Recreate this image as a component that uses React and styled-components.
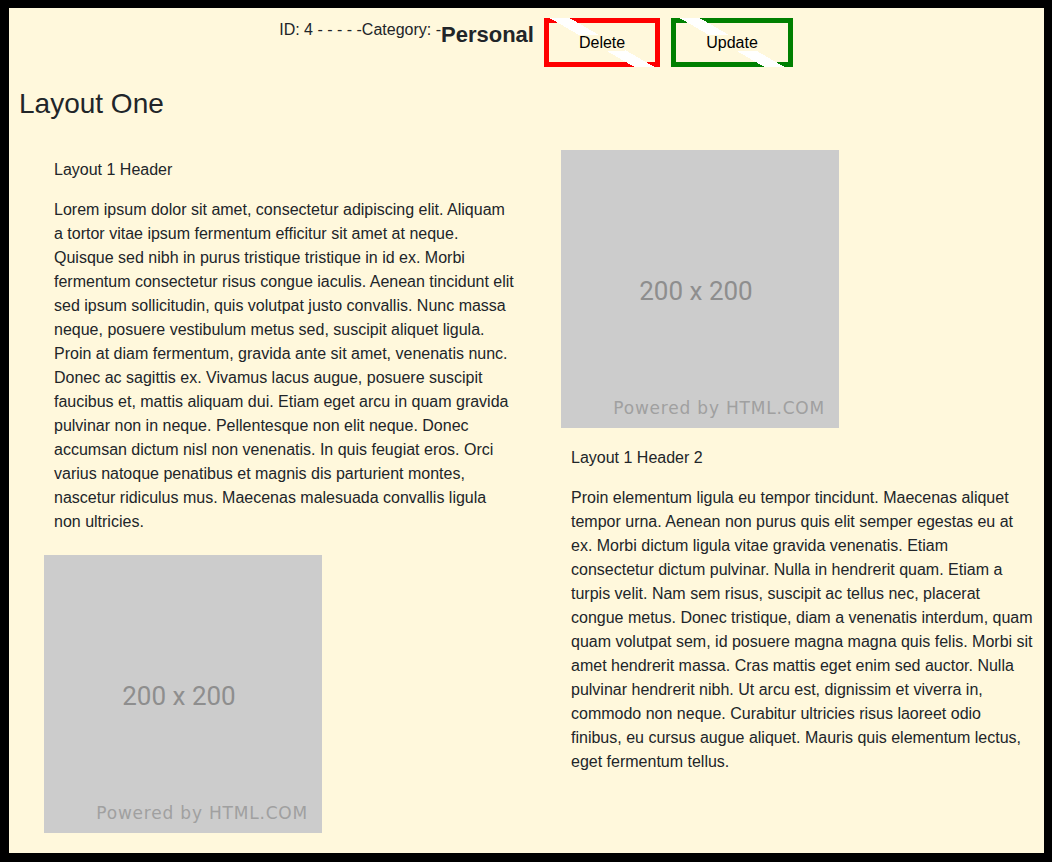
import React from 'react'
import styled, { createGlobalStyle } from 'styled-components'

const GlobalStyle = createGlobalStyle`
  html {
    background: #000;
  }
  body {
    margin: 8px 8px 9px 9px;
    font-family: "Liberation Sans", Arial, sans-serif;
    font-size: 16px;
    line-height: 1.5;
    color: #212529;
  }
  * {
    box-sizing: border-box;
  }
`

const note = {
  id: 4,
  category: 'Personal',
  title: 'Layout One',
  header: 'Layout 1 Header',
  body: 'Lorem ipsum dolor sit amet, consectetur adipiscing elit. Aliquam a tortor vitae ipsum fermentum efficitur sit amet at neque. Quisque sed nibh in purus tristique tristique in id ex. Morbi fermentum consectetur risus congue iaculis. Aenean tincidunt elit sed ipsum sollicitudin, quis volutpat justo convallis. Nunc massa neque, posuere vestibulum metus sed, suscipit aliquet ligula. Proin at diam fermentum, gravida ante sit amet, venenatis nunc. Donec ac sagittis ex. Vivamus lacus augue, posuere suscipit faucibus et, mattis aliquam dui. Etiam eget arcu in quam gravida pulvinar non in neque. Pellentesque non elit neque. Donec accumsan dictum nisl non venenatis. In quis feugiat eros. Orci varius natoque penatibus et magnis dis parturient montes, nascetur ridiculus mus. Maecenas malesuada convallis ligula non ultricies.',
  header2: 'Layout 1 Header 2',
  body2: 'Proin elementum ligula eu tempor tincidunt. Maecenas aliquet tempor urna. Aenean non purus quis elit semper egestas eu at ex. Morbi dictum ligula vitae gravida venenatis. Etiam consectetur dictum pulvinar. Nulla in hendrerit quam. Etiam a turpis velit. Nam sem risus, suscipit ac tellus nec, placerat congue metus. Donec tristique, diam a venenatis interdum, quam quam volutpat sem, id posuere magna magna quis felis. Morbi sit amet hendrerit massa. Cras mattis eget enim sed auctor. Nulla pulvinar hendrerit nibh. Ut arcu est, dignissim et viverra in, commodo non neque. Curabitur ultricies risus laoreet odio finibus, eu cursus augue aliquet. Mauris quis elementum lectus, eget fermentum tellus.'
}

const Placeholder = () => (
  <ImageBox>
    <Size>200 x 200</Size>
    <Powered>Powered by HTML.COM</Powered>
  </ImageBox>
)

const App = () => {
  return (
    <>
      <GlobalStyle />
      <Wrapper>
        {/* toolbar */}
        <Toolbar>
          <Meta>ID: {note.id} - - - - -Category: -</Meta>
          <Category>{note.category}</Category>
          <ActionButton type='button' $color='#ff0000'>
            <span>Delete</span>
          </ActionButton>
          <ActionButton type='button' $color='#008000'>
            <span>Update</span>
          </ActionButton>
        </Toolbar>
        {/* end of toolbar */}
        <Title>{note.title}</Title>
        <Columns>
          <Column>
            <TextBlock $top={8} $bottom={5}>
              <Header>{note.header}</Header>
              <Paragraph>{note.body}</Paragraph>
            </TextBlock>
            <Placeholder />
          </Column>
          <Column>
            <Placeholder />
            <TextBlock $top={18} $bottom={5}>
              <Header>{note.header2}</Header>
              <Paragraph>{note.body2}</Paragraph>
            </TextBlock>
          </Column>
        </Columns>
      </Wrapper>
    </>
  )
}

const Wrapper = styled.main`
  background: #fff8dc;
  height: calc(100vh - 17px);
  padding: 10px;
`

const Toolbar = styled.div`
  display: flex;
  justify-content: center;
  align-items: flex-start;
  padding-left: 30px;
`

const Meta = styled.span`
  font-size: 16px;
  line-height: 24px;
`

const Category = styled.h5`
  margin: 0 10px 0 0;
  font-size: 22px;
  font-weight: 700;
  line-height: 33px;
`

const ActionButton = styled.button`
  position: relative;
  height: 49px;
  padding: 0 30px;
  margin-right: 11px;
  border: 5px solid ${(p) => p.$color};
  background: transparent;
  font-family: inherit;
  font-size: 16px;
  color: #000;
  cursor: pointer;
  &::before {
    content: '';
    position: absolute;
    inset: -5px;
    background: linear-gradient(
      30deg,
      transparent calc(50% - 5px),
      #fff calc(50% - 5px),
      #fff calc(50% + 5px),
      transparent calc(50% + 5px)
    );
  }
  span {
    position: relative;
    background: #fff8dc;
    line-height: 16px;
    display: inline-block;
  }
`

const Title = styled.h3`
  margin: 20px 0 29px;
  font-size: 28px;
  font-weight: 400;
  line-height: 1.2;
`

const Columns = styled.div`
  display: grid;
  grid-template-columns: 483px 483px;
  column-gap: 34px;
  padding-left: 25px;
`

const Column = styled.div`
  display: flex;
  flex-direction: column;
  align-items: flex-start;
`

const TextBlock = styled.div`
  padding: ${(p) => p.$top}px 10px ${(p) => p.$bottom}px;
`

const Header = styled.p`
  margin: 0 0 16px;
`

const Paragraph = styled.p`
  margin: 0 0 16px;
`

const ImageBox = styled.div`
  position: relative;
  width: 278px;
  height: 278px;
  flex-shrink: 0;
  background: #cccccc;
  display: flex;
  align-items: center;
  justify-content: center;
`

const Size = styled.span`
  margin: 6px 8px 0 0;
  font-family: Roboto, sans-serif;
  font-size: 26px;
  color: #8e8e8e;
`

const Powered = styled.span`
  position: absolute;
  right: 14px;
  bottom: 6px;
  font-family: "DejaVu Sans", sans-serif;
  font-size: 17px;
  letter-spacing: 0.8px;
  color: #a0a0a0;
`

export default App
